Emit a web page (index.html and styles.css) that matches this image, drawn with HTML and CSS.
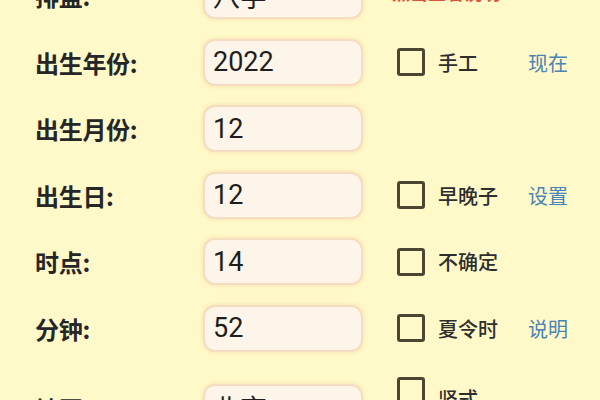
FILE: index.html
```html
<!DOCTYPE html>
<html lang="zh">
<head>
<meta charset="utf-8">
<link rel="stylesheet" href="styles.css">
</head>
<body>
<div class="form">
  <div class="row">
    <div class="label">排盘:</div>
    <div class="field">八字</div>
    <div class="note">点击查看说明</div>
  </div>
  <div class="row">
    <div class="label">出生年份:</div>
    <div class="field">2022</div>
    <div class="check"><span class="box"></span><span class="ctext">手工</span></div>
    <a class="link">现在</a>
  </div>
  <div class="row">
    <div class="label">出生月份:</div>
    <div class="field">12</div>
  </div>
  <div class="row">
    <div class="label">出生日:</div>
    <div class="field">12</div>
    <div class="check"><span class="box"></span><span class="ctext">早晚子</span></div>
    <a class="link">设置</a>
  </div>
  <div class="row">
    <div class="label">时点:</div>
    <div class="field">14</div>
    <div class="check"><span class="box"></span><span class="ctext">不确定</span></div>
  </div>
  <div class="row">
    <div class="label">分钟:</div>
    <div class="field">52</div>
    <div class="check"><span class="box"></span><span class="ctext">夏令时</span></div>
    <a class="link">说明</a>
  </div>
  <div class="row row-last">
    <div class="label">地区:</div>
    <div class="field">北京</div>
    <div class="check check-top"><span class="box"></span><span class="ctext low">竖式</span></div>
  </div>
</div>
</body>
</html>
```
FILE: styles.css
```css
html, body {
  margin: 0;
  padding: 0;
  background: #fff8c8;
  overflow: hidden;
  height: 400px;
}
body {
  font-family: "Noto Sans CJK SC", "Noto Sans", sans-serif;
  color: #222;
}
.form {
  margin-top: -37.75px;
  display: flex;
  flex-direction: column;
}
.row {
  height: 66.5px;
  display: flex;
  align-items: center;
  flex-shrink: 0;
}
.row-last {
  height: 92px;
  align-items: flex-start;
}
.row-last .label {
  margin-top: 30px;
}
.row-last .field {
  margin-top: 23px;
}
.label {
  width: 168px;
  padding-left: 35px;
  font-size: 24px;
  font-weight: 700;
  color: #262626;
  letter-spacing: -0.3px;
}
.field {
  box-sizing: border-box;
  width: 160px;
  height: 47px;
  border: 2px solid #f6dcc0;
  border-radius: 12px;
  background: #fdf5e9;
  box-shadow: 0 0 4px rgba(240, 190, 140, 0.45);
  padding-left: 8px;
  display: flex;
  align-items: center;
  font-family: Roboto, "Noto Sans CJK SC", sans-serif;
  font-size: 27px;
  color: #1e1e1e;
}
.note {
  margin-left: 29px;
  font-size: 18px;
  font-weight: 700;
  color: #e0503a;
  align-self: flex-start;
  margin-top: 17px;
}
.check {
  display: flex;
  align-items: center;
  margin-left: 34px;
  width: 131px;
}
.box {
  box-sizing: border-box;
  width: 28px;
  height: 28px;
  border: 3px solid #4b4631;
  border-radius: 3px;
  flex-shrink: 0;
}
.ctext {
  margin-left: 13px;
  font-size: 20px;
  font-weight: 500;
  color: #2e2e2e;
}
.check-top {
  align-items: flex-start;
  margin-top: 16px;
}
.low {
  margin-top: 9px;
  line-height: 26px;
}
.link {
  font-size: 20px;
  color: #4a83b6;
}
```
